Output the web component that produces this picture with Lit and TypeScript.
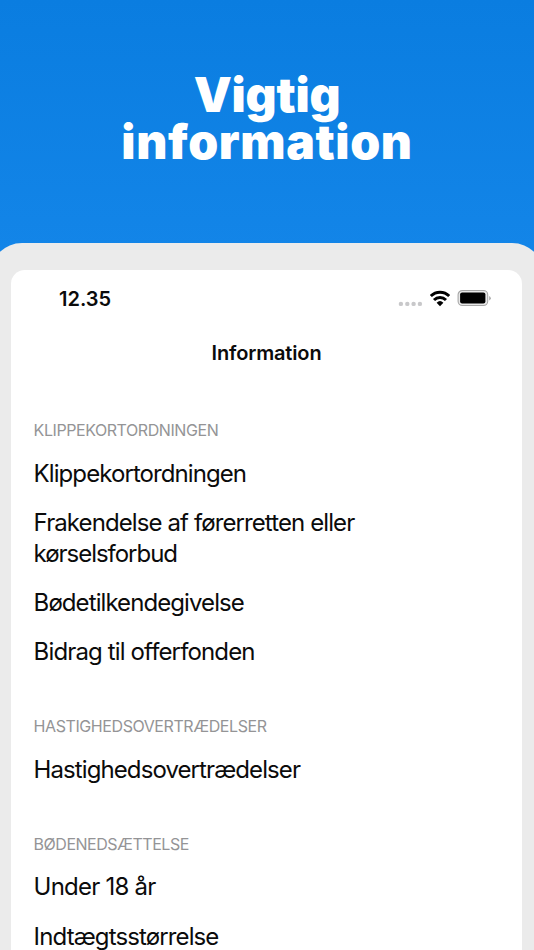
import { LitElement, html, css, svg } from "lit";
import { customElement } from "lit/decorators.js";
import { styleMap } from "lit/directives/style-map.js";

interface Line { text: string; track: number }
interface Section { title: Line; items: Line[][] }

const l = (text: string, track: number): Line => ({ text, track });

const SECTIONS: Section[] = [
  {
    title: l("KLIPPEKORTORDNINGEN", -0.43),
    items: [
      [l("Klippekortordningen", -0.92)],
      [l("Frakendelse af førerretten eller", -0.9), l("kørselsforbud", -1.03)],
      [l("Bødetilkendegivelse", -0.92)],
      [l("Bidrag til offerfonden", -0.86)],
    ],
  },
  { title: l("HASTIGHEDSOVERTRÆDELSER", -0.42), items: [[l("Hastighedsovertrædelser", -0.91)]] },
  {
    title: l("BØDENEDSÆTTELSE", -0.48),
    items: [[l("Under 18 år", -0.78)], [l("Indtægtsstørrelse", -0.88)]],
  },
];

const tracked = (x: Line) =>
  html`<span class="line" style=${styleMap({ letterSpacing: `${x.track}px` })}>${x.text}</span>`;

@customElement("app-root")
export class AppRoot extends LitElement {
  static styles = css`
    :host {
      display: block;
      height: 950px;
      overflow: hidden;
      font-family: Inter, "Liberation Sans", sans-serif;
      color: #0b0b0b;
      background: linear-gradient(#0a7de0 0, #1385e8 250px);
    }
    .hero {
      box-sizing: border-box;
      height: 243px;
      padding-top: 70.5px;
      margin: 0;
      text-align: center;
      color: #fff;
      font-size: 48px;
      line-height: 47.5px;
      font-weight: 900;
    }
    .line { display: block; white-space: nowrap; }
    .device {
      box-sizing: border-box;
      height: 760px;
      margin: 0 -10px;
      padding: 27px 22px 0 21px;
      border-radius: 32px 32px 0 0;
      background: #ebebeb;
    }
    .screen {
      height: 740px;
      border-radius: 14px 14px 0 0;
      background: #fff;
      overflow: hidden;
    }
    .status {
      display: flex;
      align-items: center;
      justify-content: space-between;
      height: 57px;
      padding: 0 30px 0 48px;
    }
    .time { font-size: 20px; font-weight: 600; }
    .icons { display: block; width: 94px; height: 20px; }
    .nav {
      height: 93.2px;
      margin: 0;
      line-height: 53px;
      text-align: center;
      font-size: 20px;
      font-weight: 600;
    }
    .list { padding: 0 22.6px; }
    .section { margin-bottom: 40px; }
    .caption {
      margin: 0 0 8.4px;
      font-size: 16px;
      line-height: 20px;
      font-weight: 400;
      color: #949496;
    }
    .item { padding: 9.1px 0; font-size: 24px; line-height: 31px; }
  `;

  render() {
    return html`
      <h1 class="hero">${tracked(l("Vigtig", -0.2))}${tracked(l("information", 0.65))}</h1>
      <div class="device">
        <main class="screen">
          <div class="status">
            <span class="time">12.35</span>
            <svg class="icons" viewBox="0 0 94 20">
              ${[2.9, 9.3, 15.6, 21.9].map((x) => svg`<circle cx=${x} cy="14.9" r="2.2" fill="#c8c8ca" />`)}
              <g fill="none" stroke="#000" stroke-width="3">
                <path d="M32.8 7 A13 13 0 0 1 51.2 7" />
                <path d="M36 11 A8.6 8.6 0 0 1 48 11" />
              </g>
              <path d="M38.6 13.7 A5 5 0 0 1 45.4 13.7 L42 17.3 Z" fill="#000" />
              <rect x="60.1" y="1.5" width="29.6" height="15" rx="4.3" fill="#e8e8e8" stroke="#a6a6a6" stroke-width="1.1" />
              <rect x="62.1" y="3.5" width="25.3" height="11" rx="2" fill="#000" />
              <path d="M91.2 6.9 Q92.8 7.7 92.8 9.2 T91.2 11.5 Z" fill="#a6a6a6" />
            </svg>
          </div>
          <h2 class="nav">${tracked(l("Information", -0.15))}</h2>
          <div class="list">
            ${SECTIONS.map(
              (s) => html`<section class="section">
                <h3 class="caption">${tracked(s.title)}</h3>
                ${s.items.map((lines) => html`<div class="item">${lines.map(tracked)}</div>`)}
              </section>`
            )}
          </div>
        </main>
      </div>
    `;
  }
}
